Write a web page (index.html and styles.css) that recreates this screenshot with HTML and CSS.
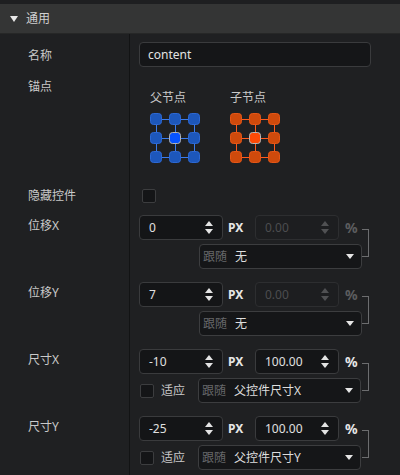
FILE: index.html
```html
<!DOCTYPE html>
<html lang="zh-CN">
<head>
  <meta charset="UTF-8">
  <meta name="viewport" content="width=device-width, initial-scale=1.0">
  <title>属性面板</title>
  <link rel="stylesheet" href="styles.css">
</head>
<body>
  <div class="panel">
    <div class="topbar"></div>
    <div class="section-head">
      <svg class="caret" width="8" height="6" viewBox="0 0 8 6"><polygon points="0,0 8,0 4,6" fill="#e8e8e8"/></svg>
      <span>通用</span>
    </div>

    <div class="props">
      <!-- name -->
      <div class="row row-name">
        <div class="label">名称</div>
        <div class="value">
          <div class="text-input">content</div>
        </div>
      </div>

      <!-- anchor -->
      <div class="row row-anchor">
        <div class="label">锚点</div>
        <div class="value anchors">
          <div class="anchor">
            <div class="anchor-title">父节点</div>
            <svg width="50" height="50" viewBox="0 0 50 50">
              <g stroke="#3b7cec" stroke-width="1">
                <line x1="6" y1="6.5" x2="44" y2="6.5"/>
                <line x1="6" y1="25.5" x2="44" y2="25.5"/>
                <line x1="6" y1="44.5" x2="44" y2="44.5"/>
                <line x1="6.5" y1="6" x2="6.5" y2="44"/>
                <line x1="25.5" y1="6" x2="25.5" y2="44"/>
                <line x1="44.5" y1="6" x2="44.5" y2="44"/>
              </g>
              <g fill="#1d57bb" stroke="#2c68d4" stroke-width="1">
                <rect x="0.5" y="0.5" width="11" height="11" rx="3"/>
                <rect x="19.5" y="0.5" width="11" height="11" rx="3"/>
                <rect x="38.5" y="0.5" width="11" height="11" rx="3"/>
                <rect x="0.5" y="19.5" width="11" height="11" rx="3"/>
                <rect x="38.5" y="19.5" width="11" height="11" rx="3"/>
                <rect x="0.5" y="38.5" width="11" height="11" rx="3"/>
                <rect x="19.5" y="38.5" width="11" height="11" rx="3"/>
                <rect x="38.5" y="38.5" width="11" height="11" rx="3"/>
              </g>
              <rect x="19.5" y="19.5" width="11" height="11" rx="3" fill="#0753ff" stroke="#b4b4b4"/>
            </svg>
          </div>
          <div class="anchor">
            <div class="anchor-title">子节点</div>
            <svg width="50" height="50" viewBox="0 0 50 50">
              <g stroke="#ff5a1c" stroke-width="1">
                <line x1="6" y1="6.5" x2="44" y2="6.5"/>
                <line x1="6" y1="25.5" x2="44" y2="25.5"/>
                <line x1="6" y1="44.5" x2="44" y2="44.5"/>
                <line x1="6.5" y1="6" x2="6.5" y2="44"/>
                <line x1="25.5" y1="6" x2="25.5" y2="44"/>
                <line x1="44.5" y1="6" x2="44.5" y2="44"/>
              </g>
              <g fill="#cf4a0c" stroke="#e65616" stroke-width="1">
                <rect x="0.5" y="0.5" width="11" height="11" rx="3"/>
                <rect x="19.5" y="0.5" width="11" height="11" rx="3"/>
                <rect x="38.5" y="0.5" width="11" height="11" rx="3"/>
                <rect x="0.5" y="19.5" width="11" height="11" rx="3"/>
                <rect x="38.5" y="19.5" width="11" height="11" rx="3"/>
                <rect x="0.5" y="38.5" width="11" height="11" rx="3"/>
                <rect x="19.5" y="38.5" width="11" height="11" rx="3"/>
                <rect x="38.5" y="38.5" width="11" height="11" rx="3"/>
              </g>
              <rect x="19.5" y="19.5" width="11" height="11" rx="3" fill="#ff4a06" stroke="#b8b8b8"/>
            </svg>
          </div>
        </div>
      </div>

      <!-- hide -->
      <div class="row row-hide">
        <div class="label">隐藏控件</div>
        <div class="value">
          <span class="checkbox"></span>
        </div>
      </div>

      <!-- position x -->
      <div class="row group">
        <div class="label">位移X</div>
        <div class="value">
          <div class="stack">
            <div class="line">
              <div class="num"><span>0</span><svg class="spin" width="8" height="14" viewBox="0 0 8 14"><polygon points="4,0 8,5 0,5"/><polygon points="0,8 8,8 4,13"/></svg></div>
              <span class="unit-px">PX</span>
              <div class="num disabled"><span>0.00</span><svg class="spin" width="8" height="14" viewBox="0 0 8 14"><polygon points="4,0 8,5 0,5"/><polygon points="0,8 8,8 4,13"/></svg></div>
              <span class="unit-pct disabled">%</span>
            </div>
            <div class="line bottom">
              <div class="select"><span class="muted">跟随</span><span class="sel-text">无</span><svg class="drop" width="8" height="5" viewBox="0 0 8 5"><polygon points="0,0 8,0 4,5"/></svg></div>
            </div>
          </div>
          <div class="bracket"></div>
        </div>
      </div>

      <!-- position y -->
      <div class="row group">
        <div class="label">位移Y</div>
        <div class="value">
          <div class="stack">
            <div class="line">
              <div class="num"><span>7</span><svg class="spin" width="8" height="14" viewBox="0 0 8 14"><polygon points="4,0 8,5 0,5"/><polygon points="0,8 8,8 4,13"/></svg></div>
              <span class="unit-px">PX</span>
              <div class="num disabled"><span>0.00</span><svg class="spin" width="8" height="14" viewBox="0 0 8 14"><polygon points="4,0 8,5 0,5"/><polygon points="0,8 8,8 4,13"/></svg></div>
              <span class="unit-pct disabled">%</span>
            </div>
            <div class="line bottom">
              <div class="select"><span class="muted">跟随</span><span class="sel-text">无</span><svg class="drop" width="8" height="5" viewBox="0 0 8 5"><polygon points="0,0 8,0 4,5"/></svg></div>
            </div>
          </div>
          <div class="bracket"></div>
        </div>
      </div>

      <!-- size x -->
      <div class="row group">
        <div class="label">尺寸X</div>
        <div class="value">
          <div class="stack">
            <div class="line">
              <div class="num"><span>-10</span><svg class="spin" width="8" height="14" viewBox="0 0 8 14"><polygon points="4,0 8,5 0,5"/><polygon points="0,8 8,8 4,13"/></svg></div>
              <span class="unit-px">PX</span>
              <div class="num"><span>100.00</span><svg class="spin" width="8" height="14" viewBox="0 0 8 14"><polygon points="4,0 8,5 0,5"/><polygon points="0,8 8,8 4,13"/></svg></div>
              <span class="unit-pct">%</span>
            </div>
            <div class="line bottom fit">
              <span class="checkbox"></span>
              <span class="fit-label">适应</span>
              <div class="select"><span class="muted">跟随</span><span class="sel-text">父控件尺寸X</span><svg class="drop" width="8" height="5" viewBox="0 0 8 5"><polygon points="0,0 8,0 4,5"/></svg></div>
            </div>
          </div>
          <div class="bracket"></div>
        </div>
      </div>

      <!-- size y -->
      <div class="row group">
        <div class="label">尺寸Y</div>
        <div class="value">
          <div class="stack">
            <div class="line">
              <div class="num"><span>-25</span><svg class="spin" width="8" height="14" viewBox="0 0 8 14"><polygon points="4,0 8,5 0,5"/><polygon points="0,8 8,8 4,13"/></svg></div>
              <span class="unit-px">PX</span>
              <div class="num"><span>100.00</span><svg class="spin" width="8" height="14" viewBox="0 0 8 14"><polygon points="4,0 8,5 0,5"/><polygon points="0,8 8,8 4,13"/></svg></div>
              <span class="unit-pct">%</span>
            </div>
            <div class="line bottom fit">
              <span class="checkbox"></span>
              <span class="fit-label">适应</span>
              <div class="select"><span class="muted">跟随</span><span class="sel-text">父控件尺寸Y</span><svg class="drop" width="8" height="5" viewBox="0 0 8 5"><polygon points="0,0 8,0 4,5"/></svg></div>
            </div>
          </div>
          <div class="bracket"></div>
        </div>
      </div>
    </div>
  </div>
</body>
</html>
```

FILE: styles.css
```css
/* property panel */
body {
  margin: 0;
  background: #1f2022;
  font-family: "Noto Sans", "Noto Sans CJK SC", sans-serif;
  font-size: 12px;
  line-height: 16px;
  color: #c9c9c9;
  overflow: hidden;
}

.panel {
  width: 400px;
  height: 475px;
  display: flex;
  flex-direction: column;
}

.topbar {
  height: 4px;
  background: #1e1f21;
}

.section-head {
  height: 29px;
  background: #343535;
  border-bottom: 1px solid #262727;
  display: flex;
  align-items: center;
  padding-left: 10px;
  color: #d0d0d0;
}

.section-head .caret {
  margin-right: 8px;
  margin-top: 1px;
}

.props {
  flex: 1;
  background: linear-gradient(to right, transparent 129px, #121314 129px, #121314 130px, transparent 130px);
}

.row {
  display: flex;
}

.label {
  width: 130px;
  box-sizing: border-box;
  padding-left: 28px;
  flex-shrink: 0;
}

.value {
  padding-left: 9px;
  display: flex;
}

/* name */
.row-name .label {
  padding-top: 14px;
}

.row-name .value {
  padding-top: 8px;
}

.text-input {
  width: 232px;
  height: 25px;
  box-sizing: border-box;
  background: #151618;
  border: 1px solid #3a3b3d;
  border-radius: 4px;
  padding-left: 8px;
  display: flex;
  align-items: center;
  color: #e2e2e2;
}

/* anchor */
.row-anchor {
  padding-bottom: 20px;
}

.row-anchor .label {
  padding-top: 12px;
}

.anchors {
  padding-top: 23px;
  padding-left: 20px;
  gap: 30px;
}

.anchor-title {
  margin-bottom: 7px;
}

.anchor svg {
  display: block;
}

/* hide */
.row-hide .label {
  padding-top: 5px;
}

.row-hide .value {
  padding-top: 6px;
  padding-left: 12px;
}

.checkbox {
  width: 14px;
  height: 14px;
  box-sizing: border-box;
  background: #141517;
  border: 1px solid #3c3d3f;
  border-radius: 2px;
  display: block;
  flex-shrink: 0;
}

/* position / size groups */
.group .label {
  padding-top: 14px;
}

.group .value {
  padding-top: 11px;
  padding-bottom: 2px;
}

.stack {
  width: 223px;
  display: flex;
  flex-direction: column;
  gap: 4px;
}

.line {
  display: flex;
  align-items: center;
  height: 25px;
}

.line.bottom {
  justify-content: flex-end;
}

.num {
  width: 84px;
  height: 25px;
  box-sizing: border-box;
  background: #141517;
  border: 1px solid #3a3b3d;
  border-radius: 4px;
  display: flex;
  align-items: center;
  justify-content: space-between;
  padding: 0 9px 0 9px;
  color: #e0e0e0;
}

.num .spin {
  fill: #e4e4e4;
  display: block;
}

.num.disabled {
  background: #1d1e20;
  border-color: #2d2e30;
  color: #4c4d4f;
}

.num.disabled .spin {
  fill: #505153;
}

.unit-px {
  width: 32px;
  box-sizing: border-box;
  padding-left: 5px;
  font-weight: bold;
  color: #e6e6e6;
}

.unit-pct {
  margin-left: 6px;
  font-size: 14px;
  font-weight: bold;
  color: #e6e6e6;
}

.unit-pct.disabled {
  color: #5c5d5f;
}

.select {
  width: 163px;
  height: 25px;
  box-sizing: border-box;
  background: #151618;
  border: 1px solid #3c3d3f;
  border-radius: 4px;
  display: flex;
  align-items: center;
  padding: 0 7px 0 3px;
  color: #dedede;
}

.select .muted {
  color: #66676a;
  width: 32px;
}

.select .sel-text {
  flex: 1;
}

.select .drop {
  fill: #e6e6e6;
  display: block;
}

.line.fit {
  justify-content: flex-start;
  padding-left: 1px;
}

.fit-label {
  margin-left: 7px;
  width: 37px;
}

.bracket {
  width: 7px;
  height: 28px;
  box-sizing: border-box;
  margin-top: 14px;
  border: 1px solid #6c6d6f;
  border-left: 0;
}
```
